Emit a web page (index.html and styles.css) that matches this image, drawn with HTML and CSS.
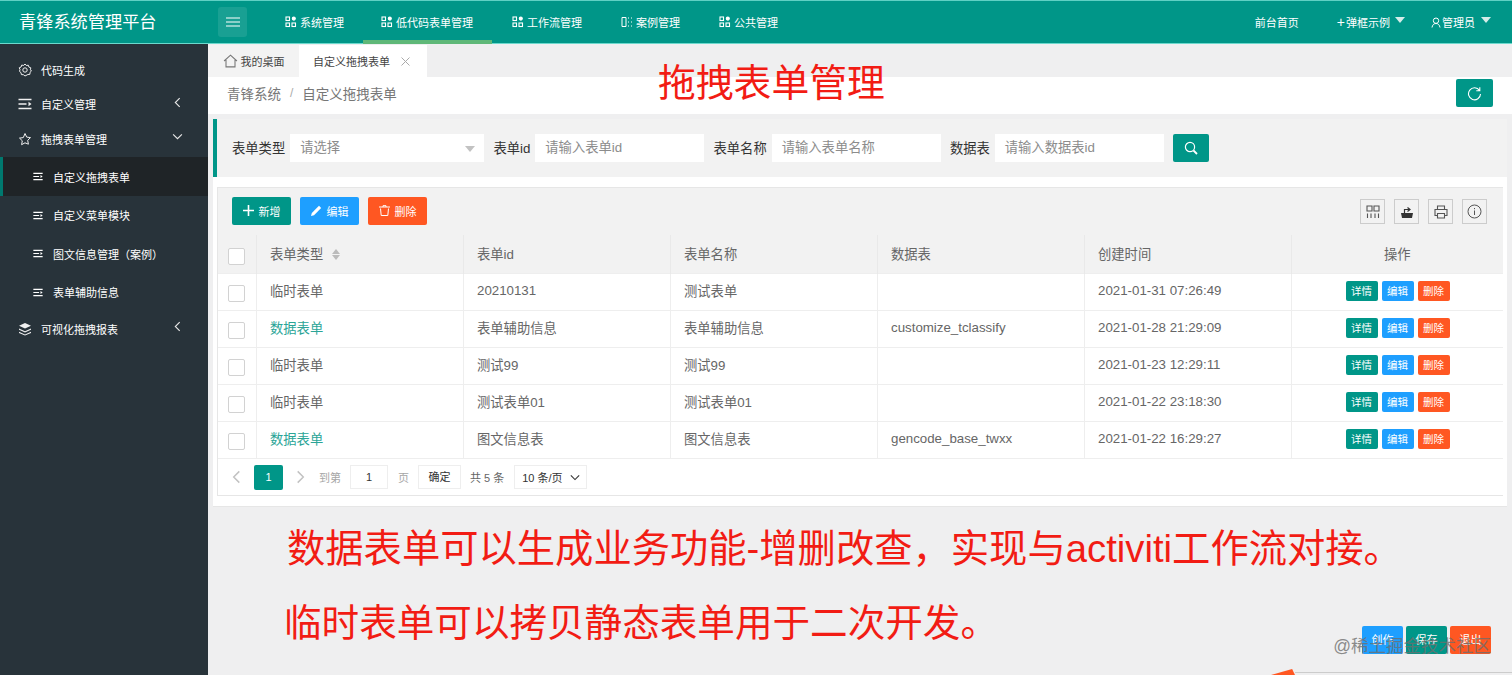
FILE: index.html
```html
<!DOCTYPE html>
<html lang="zh-CN">
<head>
  <meta charset="UTF-8">
  <title>青锋系统管理平台</title>
  <link rel="stylesheet" href="styles.css">
</head>
<body>
  <svg class="sprite" xmlns="http://www.w3.org/2000/svg">
    <symbol id="i-list" viewBox="0 0 14 12"><path d="M.5 1.500h13M.5 6h8M.5 10.500h13" fill="none" stroke="currentColor" stroke-width="1.700"/><path d="M10.500 3.800L13.500 6l-3 2.200z" fill="currentColor"/></symbol>
    <symbol id="i-apps" viewBox="0 0 12 12"><g fill="none" stroke="currentColor" stroke-width="1.100"><rect x="1" y="1" width="3.500" height="3.500"/><rect x="1" y="7" width="3.500" height="3.500"/><rect x="7" y="7" width="3.500" height="3.500"/><circle cx="8.800" cy="2.600" r="1.500" fill="currentColor"/></g></symbol>
    <symbol id="i-left" viewBox="0 0 8 12"><path d="M6.500 1L1.500 6l5 5" fill="none" stroke="currentColor" stroke-width="1.300"/></symbol>
    <symbol id="i-right" viewBox="0 0 8 12"><path d="M1.500 1l5 5-5 5" fill="none" stroke="currentColor" stroke-width="1.300"/></symbol>
    <symbol id="i-down" viewBox="0 0 12 8"><path d="M1 1.500l5 5 5-5" fill="none" stroke="currentColor" stroke-width="1.300"/></symbol>
  </svg>

  <header class="topbar">
    <div class="logo">青锋系统管理平台</div>
    <button class="menu-toggle" type="button">
      <svg width="14" height="10" viewBox="0 0 14 10"><path d="M0 1h14M0 5h14M0 9h14" stroke="#fff" stroke-width="1.200"/></svg>
    </button>
    <nav class="topnav">
      <a class="topnav-item"><svg class="ico12"><use href="#i-apps"/></svg>系统管理</a>
      <a class="topnav-item active"><svg class="ico12"><use href="#i-apps"/></svg>低代码表单管理</a>
      <a class="topnav-item"><svg class="ico12"><use href="#i-apps"/></svg>工作流管理</a>
      <a class="topnav-item"><svg class="ico12" viewBox="0 0 12 12"><path d="M1 1.500h4v9H1zM7 2h1M7 6h1M7 10h1M10 2h1M10 6h1M10 10h1" fill="none" stroke="currentColor"/></svg>案例管理</a>
      <a class="topnav-item"><svg class="ico12"><use href="#i-apps"/></svg>公共管理</a>
    </nav>
    <div class="topright">
      <a class="home-link">前台首页</a>
      <a class="dialog-link"><span class="plus">+</span>弹框示例<span class="caret"></span></a>
      <a class="user-link"><svg width="10" height="11" viewBox="0 0 10 11"><path d="M5 1a2.700 2.700 0 1 1 0 5.400A2.700 2.700 0 0 1 5 1zM1 10.500c.4-2.500 1.800-4 4-4s3.600 1.500 4 4" fill="none" stroke="#fff"/></svg>管理员<span class="caret"></span></a>
    </div>
  </header>

  <div class="layout">
    <aside class="sidebar">
      <ul class="side-menu">
        <li class="side-item first">
          <svg class="side-ico" viewBox="0 0 14 14"><g fill="none" stroke="currentColor"><circle cx="7" cy="7" r="2.200"/><path d="M7 1l1.300 1.500 2-.3.600 1.900 1.900.7-.4 2 1.100 1.200-1.500 1.300-.1 2-2 .2L7 13l-1.600-1.300-2-.1-.4-2L1.500 8.400 2 6.500 1.200 4.800l1.900-.8.600-1.900 2 .3z"/></g></svg>
          <span>代码生成</span>
        </li>
        <li class="side-item">
          <svg class="side-ico list"><use href="#i-list"/></svg>
          <span>自定义管理</span>
          <svg class="side-arrow left"><use href="#i-left"/></svg>
        </li>
        <li class="side-item">
          <svg class="side-ico" viewBox="0 0 14 14"><path d="M7 1.500l1.700 3.600 3.800.5-2.800 2.700.7 3.900L7 10.800l-3.400 1.900.7-3.900L1.500 6.100l3.800-.5z" fill="none" stroke="currentColor"/></svg>
          <span>拖拽表单管理</span>
          <svg class="side-arrow down"><use href="#i-down"/></svg>
        </li>
        <li class="side-sub active"><svg class="sub-ico"><use href="#i-list"/></svg><span>自定义拖拽表单</span></li>
        <li class="side-sub"><svg class="sub-ico"><use href="#i-list"/></svg><span>自定义菜单模块</span></li>
        <li class="side-sub"><svg class="sub-ico"><use href="#i-list"/></svg><span>图文信息管理（案例）</span></li>
        <li class="side-sub"><svg class="sub-ico"><use href="#i-list"/></svg><span>表单辅助信息</span></li>
        <li class="side-item last">
          <svg class="side-ico" viewBox="0 0 14 14"><path d="M7 1l6 2.800-6 2.800-6-2.800zM1 6.500l6 2.800 6-2.800v1.200l-6 2.800-6-2.800zM1 9.700l6 2.800 6-2.800v1.200l-6 2.600-6-2.600z" fill="currentColor"/></svg>
          <span>可视化拖拽报表</span>
          <svg class="side-arrow left"><use href="#i-left"/></svg>
        </li>
      </ul>
    </aside>

    <main class="content">
      <div class="tabs">
        <div class="tab">
          <svg width="15" height="14" viewBox="0 0 14 13"><path d="M1 6.500L7 1l6 5.500M2.800 5.500V12h8.400V5.500" fill="none" stroke="#777"/></svg>
          我的桌面
        </div>
        <div class="tab current">自定义拖拽表单<svg class="tab-close" width="9" height="9" viewBox="0 0 9 9"><path d="M.5.500l8 8M8.500.500l-8 8" stroke="#aaa"/></svg></div>
      </div>

      <div class="crumbs">
        <span>青锋系统</span><i>/</i><span>自定义拖拽表单</span>
        <button class="refresh" type="button">
          <svg width="15" height="15" viewBox="0 0 15 15"><path d="M12.500 4.500A6 6 0 1 0 13.500 8M12.800 1.200v3.500H9.300" fill="none" stroke="#fff" stroke-width="1.100"/></svg>
        </button>
      </div>

      <form class="search-bar">
        <label class="search-label">表单类型</label>
        <div class="field select-field">请选择<span class="select-caret"></span></div>
        <label class="search-label">表单id</label>
        <div class="field">请输入表单id</div>
        <label class="search-label">表单名称</label>
        <div class="field">请输入表单名称</div>
        <label class="search-label">数据表</label>
        <div class="field">请输入数据表id</div>
        <button class="search-btn" type="button">
          <svg width="14" height="14" viewBox="0 0 14 14"><circle cx="6" cy="6" r="4.600" fill="none" stroke="#fff" stroke-width="1.200"/><path d="M9.500 9.500l3.500 3.500" stroke="#fff" stroke-width="1.800"/></svg>
        </button>
      </form>

      <section class="card">
        <div class="grid-box">
          <div class="toolbar">
            <button class="btn btn-green" type="button"><svg width="11" height="11" viewBox="0 0 11 11"><path d="M5.500 0v11M0 5.500h11" stroke="#fff" stroke-width="1.600"/></svg>新增</button>
            <button class="btn btn-blue" type="button"><svg width="11" height="11" viewBox="0 0 11 11"><path d="M0 11l.8-3L8 .8 10.200 3 3 10.200z" fill="#fff"/></svg>编辑</button>
            <button class="btn btn-orange" type="button"><svg width="11" height="11" viewBox="0 0 11 11"><path d="M0 2h11M4 2V.7h3V2M1.500 3.500l.7 7h6.600l.7-7" fill="none" stroke="#fff"/></svg>删除</button>
            <div class="tool-icons">
              <span class="tool-icon"><svg width="14" height="14" viewBox="0 0 14 14"><path d="M1 1h5v5H1zM8 1h5v5H8zM1.500 8.500V13M5 8.500V13M9 8.500V13M12.500 8.500V13" fill="none" stroke="#555" stroke-width="1.100"/></svg></span>
              <span class="tool-icon"><svg width="14" height="14" viewBox="0 0 14 14"><path d="M1 8h12l-1 5H2z" fill="#333"/><path d="M4.500 8V4.500h4.500M7.500 2.500L10 4.500 7.500 6.500" fill="none" stroke="#333" stroke-width="1.200"/></svg></span>
              <span class="tool-icon"><svg width="14" height="14" viewBox="0 0 14 14"><path d="M3.500 4V1h7v3M3.500 10.500H1V4.500h12v6h-2.500M3.500 8.500h7V13h-7z" fill="none" stroke="#555" stroke-width="1.100"/></svg></span>
              <span class="tool-icon"><svg width="15" height="15" viewBox="0 0 15 15"><circle cx="7.500" cy="7.500" r="6.500" fill="none" stroke="#555"/><path d="M7.500 6.500v4.500M7.500 4v1.200" stroke="#555"/></svg></span>
            </div>
          </div>

          <table class="data-table">
            <colgroup>
              <col class="col-check"><col class="col-w"><col class="col-w"><col class="col-w"><col class="col-w"><col class="col-w"><col>
            </colgroup>
            <thead>
              <tr>
                <th><span class="check"></span></th>
                <th>表单类型<span class="sort"></span></th>
                <th>表单id</th>
                <th>表单名称</th>
                <th>数据表</th>
                <th>创建时间</th>
                <th class="center">操作</th>
              </tr>
            </thead>
            <tbody>
              <tr>
                <td><span class="check"></span></td><td>临时表单</td><td>20210131</td><td>测试表单</td><td></td><td>2021-01-31 07:26:49</td>
                <td class="ops"><a class="mini btn-green">详情</a><a class="mini btn-blue">编辑</a><a class="mini btn-orange">删除</a></td>
              </tr>
              <tr>
                <td><span class="check"></span></td><td class="link">数据表单</td><td>表单辅助信息</td><td>表单辅助信息</td><td>customize_tclassify</td><td>2021-01-28 21:29:09</td>
                <td class="ops"><a class="mini btn-green">详情</a><a class="mini btn-blue">编辑</a><a class="mini btn-orange">删除</a></td>
              </tr>
              <tr>
                <td><span class="check"></span></td><td>临时表单</td><td>测试99</td><td>测试99</td><td></td><td>2021-01-23 12:29:11</td>
                <td class="ops"><a class="mini btn-green">详情</a><a class="mini btn-blue">编辑</a><a class="mini btn-orange">删除</a></td>
              </tr>
              <tr>
                <td><span class="check"></span></td><td>临时表单</td><td>测试表单01</td><td>测试表单01</td><td></td><td>2021-01-22 23:18:30</td>
                <td class="ops"><a class="mini btn-green">详情</a><a class="mini btn-blue">编辑</a><a class="mini btn-orange">删除</a></td>
              </tr>
              <tr>
                <td><span class="check"></span></td><td class="link">数据表单</td><td>图文信息表</td><td>图文信息表</td><td>gencode_base_twxx</td><td>2021-01-22 16:29:27</td>
                <td class="ops"><a class="mini btn-green">详情</a><a class="mini btn-blue">编辑</a><a class="mini btn-orange">删除</a></td>
              </tr>
            </tbody>
          </table>

          <div class="pager">
            <svg class="pg-arrow"><use href="#i-left"/></svg>
            <span class="pg-num">1</span>
            <svg class="pg-arrow"><use href="#i-right"/></svg>
            <span class="pg-text goto">到第</span>
            <span class="pg-input">1</span>
            <span class="pg-text">页</span>
            <span class="pg-ok">确定</span>
            <span class="pg-total">共 5 条</span>
            <span class="pg-size">10 条/页<svg width="10" height="7"><use href="#i-down"/></svg></span>
          </div>
        </div>
      </section>

      <div class="notes">
        <p class="note-a">数据表单可以生成业务功能-增删改查，实现与activiti工作流对接。</p>
        <p class="note-b">临时表单可以拷贝静态表单用于二次开发。</p>
      </div>

      <h1 class="note-title">拖拽表单管理</h1>

      <div class="float-actions">
        <span class="float-btn btn-blue">创作</span>
        <span class="float-btn btn-green">保存</span>
        <span class="float-btn btn-orange">退出</span>
      </div>
      <div class="watermark">@稀土掘金技术社区</div>
      <div class="corner-line"></div>
    </main>
  </div>
</body>
</html>
```

FILE: styles.css
```css
:root {
  --teal: #009688;
  --blue: #1e9fff;
  --orange: #ff5722;
  --side-bg: #28333a;
  --line: #e9e9e9;
  --text: #666;
}
* {
  box-sizing: border-box;
  margin: 0;
  padding: 0;
}
html, body {
  height: 100%;
  overflow: hidden;
}
body {
  font-family: "Liberation Sans", "Noto Sans CJK SC", sans-serif;
  background: #efeff0;
  color: var(--text);
  display: flex;
  flex-direction: column;
}
.sprite {
  display: none;
}
button {
  border: none;
  cursor: pointer;
  font-family: inherit;
}

/* top bar */
.topbar {
  height: 44px;
  flex: none;
  display: flex;
  align-items: center;
  background: var(--teal);
  border-top: 1px solid #5fd0c4;
  border-bottom: 1px solid #6cd9cd;
  color: #fff;
}
.logo {
  width: 218px;
  padding: 0 0 3px 19px;
  font-size: 17.2px;
}
.menu-toggle {
  width: 29px;
  height: 30px;
  background: #19a093;
  border-radius: 3px;
  display: flex;
  align-items: center;
  justify-content: center;
}
.topnav {
  display: flex;
  height: 100%;
  margin-left: 18px;
  align-self: stretch;
}
.topnav-item {
  display: flex;
  align-items: center;
  gap: 3px;
  padding: 0 19px 0 20px;
  font-size: 11px;
  color: #fff;
}
.topnav-item.active {
  height: 43px;
  padding: 3px 19px 1px 18px;
  border-bottom: 4px solid #5fb878;
}
.ico12 {
  width: 12px;
  height: 12px;
  color: #fff;
}
.topright {
  margin-left: auto;
  display: flex;
  align-items: center;
  font-size: 11px;
  gap: 38px;
  padding-right: 21px;
}
.plus {
  font-size: 14px;
  line-height: 14px;
  margin-right: 1px;
}
.caret {
  display: inline-block;
  width: 0;
  height: 0;
  margin-left: 5px;
  border: 5px solid transparent;
  border-top: 6px solid #d5ece9;
  border-bottom: 0;
  position: relative;
  top: -2px;
}
.dialog-link {
  display: flex;
  align-items: center;
}
.user-link {
  display: flex;
  align-items: center;
  gap: 1px;
  margin-left: -12px;
}

/* sidebar */
.layout {
  flex: 1;
  display: flex;
  min-height: 0;
}
.sidebar {
  width: 208px;
  flex: none;
  background: var(--side-bg);
  color: #fff;
  font-size: 11px;
}
.side-menu {
  list-style: none;
  padding-top: 9px;
}
.side-item {
  height: 35px;
  display: flex;
  align-items: center;
  padding: 0 0 .5px 18px;
  gap: 9px;
}
.side-item.first {
  height: 34px;
}
.side-ico {
  width: 14px;
  height: 14px;
  color: #f0f0f0;
}
.side-ico.list {
  height: 12px;
}
.side-arrow {
  margin-left: auto;
  margin-right: 27px;
  margin-bottom: 4px;
  color: #e8e8e8;
}
.side-arrow.left {
  width: 7px;
  height: 11px;
}
.side-arrow.down {
  width: 11px;
  height: 7px;
  margin-right: 25px;
  margin-bottom: 6px;
}
.side-sub {
  height: 38.500px;
  display: flex;
  align-items: center;
  padding-left: 33px;
  gap: 10px;
}
.side-sub.active {
  background: #1f2427;
  border-left: 3px solid #00796f;
  padding-left: 30px;
  height: 39px;
}
.sub-ico {
  width: 10px;
  height: 9px;
}

/* main column */
.content {
  flex: 1;
  min-width: 0;
  position: relative;
  overflow: hidden;
}
.tabs {
  height: 33px;
  padding-top: 1px;
  display: flex;
  font-size: 11px;
  color: #444;
}
.tab {
  width: 91px;
  background: #f3f3f3;
  display: flex;
  align-items: center;
  justify-content: center;
  gap: 3px;
}
.tab.current {
  width: 128px;
  background: #fff;
  justify-content: flex-start;
  padding-left: 14px;
  gap: 11px;
}
.crumbs {
  height: 37px;
  padding: 0 0 5px 19px;
  background: #fff;
  display: flex;
  align-items: center;
  font-size: 13.500px;
  color: #777;
}
.crumbs i {
  font-style: normal;
  margin: 0 9px;
  color: #aaa;
  font-size: 12px;
}
.refresh {
  margin-left: auto;
  margin-right: 19px;
  width: 37px;
  height: 28px;
  background: var(--teal);
  border-radius: 2px;
  display: flex;
  align-items: center;
  justify-content: center;
}

/* search */
.search-bar {
  margin: 5px 5px 0;
  height: 58px;
  background: #f2f2f2;
  border-left: 4px solid var(--teal);
  display: flex;
  align-items: center;
  padding: 0 0 1px 15px;
  font-size: 13.300px;
}
.search-label {
  color: #333;
  margin-right: 5px;
  white-space: nowrap;
}
.field {
  width: 169px;
  height: 28px;
  margin: 1px 9.200px 0 0;
  padding-left: 10px;
  background: #fff;
  line-height: 27px;
  color: #8c8c8c;
  font-size: 13.300px;
}
.select-field {
  width: 194px;
  position: relative;
}
.select-caret {
  position: absolute;
  right: 9px;
  top: 12px;
  border: 5.500px solid transparent;
  border-top: 6px solid #c2c2c2;
  border-bottom: 0;
}
.search-btn {
  width: 36px;
  height: 28px;
  margin-top: 1px;
  background: var(--teal);
  border-radius: 2px;
  display: flex;
  align-items: center;
  justify-content: center;
}

/* table card */
.card {
  margin: 0 5px;
  padding: 10px 4px 10px 4px;
  background: #fff;
  border-bottom: 1px solid #e6e6e6;
}
.grid-box {
  border: 1px solid #e6e6e6;
  border-right-width: 0;
}
.toolbar {
  height: 47px;
  background: #f2f2f2;
  display: flex;
  align-items: center;
  padding-left: 14px;
  gap: 9px;
}
.btn {
  width: 59px;
  height: 28px;
  margin-bottom: 2px;
  border-radius: 2px;
  color: #fff;
  font-size: 11px;
  display: flex;
  align-items: center;
  justify-content: center;
  gap: 5px;
}
.btn-green { background: var(--teal); }
.btn-blue { background: var(--blue); }
.btn-orange { background: var(--orange); }
.tool-icons {
  margin-left: auto;
  display: flex;
  gap: 9px;
  padding-right: 16px;
}
.tool-icon {
  width: 25px;
  height: 25px;
  border: 1px solid #ccc;
  display: flex;
  align-items: center;
  justify-content: center;
}
.data-table {
  width: 100%;
  border-collapse: collapse;
  table-layout: fixed;
  font-size: 13.300px;
}
.col-check { width: 38px; }
.col-w { width: 207px; }
.data-table th {
  height: 38px;
  background: #f2f2f2;
  font-weight: normal;
  text-align: left;
  padding-left: 13.500px;
  color: #666;
  border: 1px solid #e9e9e9;
  border-width: 0 0 0 1px;
}
.data-table th:first-child,
.data-table td:first-child {
  border-left: 0;
  padding-left: 10px;
}
.data-table td {
  height: 37px;
  padding: 0 0 2px 13.500px;
  color: #666;
  background: #fff;
  border-top: 1px solid #eee;
  border-left: 1px solid #eee;
  white-space: nowrap;
}
.data-table th.center {
  text-align: center;
  padding-left: 0;
}
.data-table td.link {
  color: #2ba597;
}
.check {
  display: block;
  width: 17px;
  height: 17px;
  background: #fff;
  border: 1px solid #d2d2d2;
  border-radius: 2px;
  margin-top: 6px;
}
.sort {
  display: inline-block;
  width: 0;
  margin-left: 9px;
  vertical-align: -1px;
  border: 4.500px solid transparent;
  border-top: 5px solid #bbb;
  border-bottom: 0;
  position: relative;
}
.sort::before {
  content: "";
  position: absolute;
  left: -4.500px;
  top: -11px;
  border: 4.500px solid transparent;
  border-bottom: 5px solid #bbb;
  border-top: 0;
}
.data-table td.ops {
  padding-left: 54px;
}
.mini {
  display: inline-block;
  width: 32px;
  height: 20px;
  line-height: 20px;
  margin-right: 4px;
  border-radius: 2px;
  text-align: center;
  color: #fff;
  font-size: 10.500px;
}

/* pager */
.pager {
  height: 37px;
  background: #fff;
  border-top: 1px solid #eee;
  display: flex;
  align-items: center;
  padding-left: 14px;
  font-size: 11px;
}
.pg-arrow {
  width: 9px;
  height: 14px;
  color: #c2c2c2;
}
.pg-num {
  width: 29px;
  height: 25px;
  margin: 0 13px;
  line-height: 25px;
  text-align: center;
  background: var(--teal);
  color: #fff;
  border-radius: 2px;
}
.pg-text {
  color: #a6a6a6;
  margin-right: 9px;
}
.pg-text.goto {
  margin-left: 14px;
}
.pg-input {
  width: 38px;
  height: 24px;
  margin-right: 10px;
  line-height: 22px;
  text-align: center;
  border: 1px solid #eee;
  color: #333;
}
.pg-ok {
  width: 43px;
  height: 24px;
  line-height: 22px;
  text-align: center;
  border: 1px solid #eee;
  color: #333;
  margin-right: 9px;
}
.pg-total {
  color: #666;
  margin-right: 10px;
}
.pg-size {
  width: 73px;
  height: 24px;
  border: 1px solid #eee;
  color: #333;
  display: flex;
  align-items: center;
  justify-content: space-between;
  padding: 0 6px 0 7px;
}

/* red annotations drawn on top of the screen */
.notes {
  padding: 22px 0 0 79px;
  color: #f21c14;
}
.note-a {
  font-size: 38.300px;
  line-height: 40px;
  white-space: nowrap;
}
.note-b {
  font-size: 37.600px;
  line-height: 40px;
  margin-top: 34px;
  margin-left: -3px;
  white-space: nowrap;
}
.note-title {
  position: absolute;
  left: 450px;
  top: 16px;
  font-size: 37.800px;
  line-height: 46px;
  font-weight: normal;
  color: #f21c14;
}
.float-actions {
  position: absolute;
  right: 21px;
  bottom: 21px;
  display: flex;
  gap: 3px;
}
.float-btn {
  width: 41px;
  height: 28px;
  line-height: 28px;
  border-radius: 2px;
  text-align: center;
  color: #fff;
  font-size: 11px;
}
.watermark {
  position: absolute;
  right: 21px;
  bottom: 18px;
  font-size: 17.500px;
  color: rgba(110, 110, 110, 0.8);
}
.corner-line {
  position: absolute;
  right: 0;
  bottom: 2px;
  width: 217px;
  height: 1px;
  background: #ccc;
}
.corner-line::before {
  content: "";
  position: absolute;
  left: -24px;
  bottom: -2px;
  width: 24px;
  height: 6px;
  background: var(--orange);
  clip-path: polygon(0 100%, 88% 0, 100% 100%);
}
```
